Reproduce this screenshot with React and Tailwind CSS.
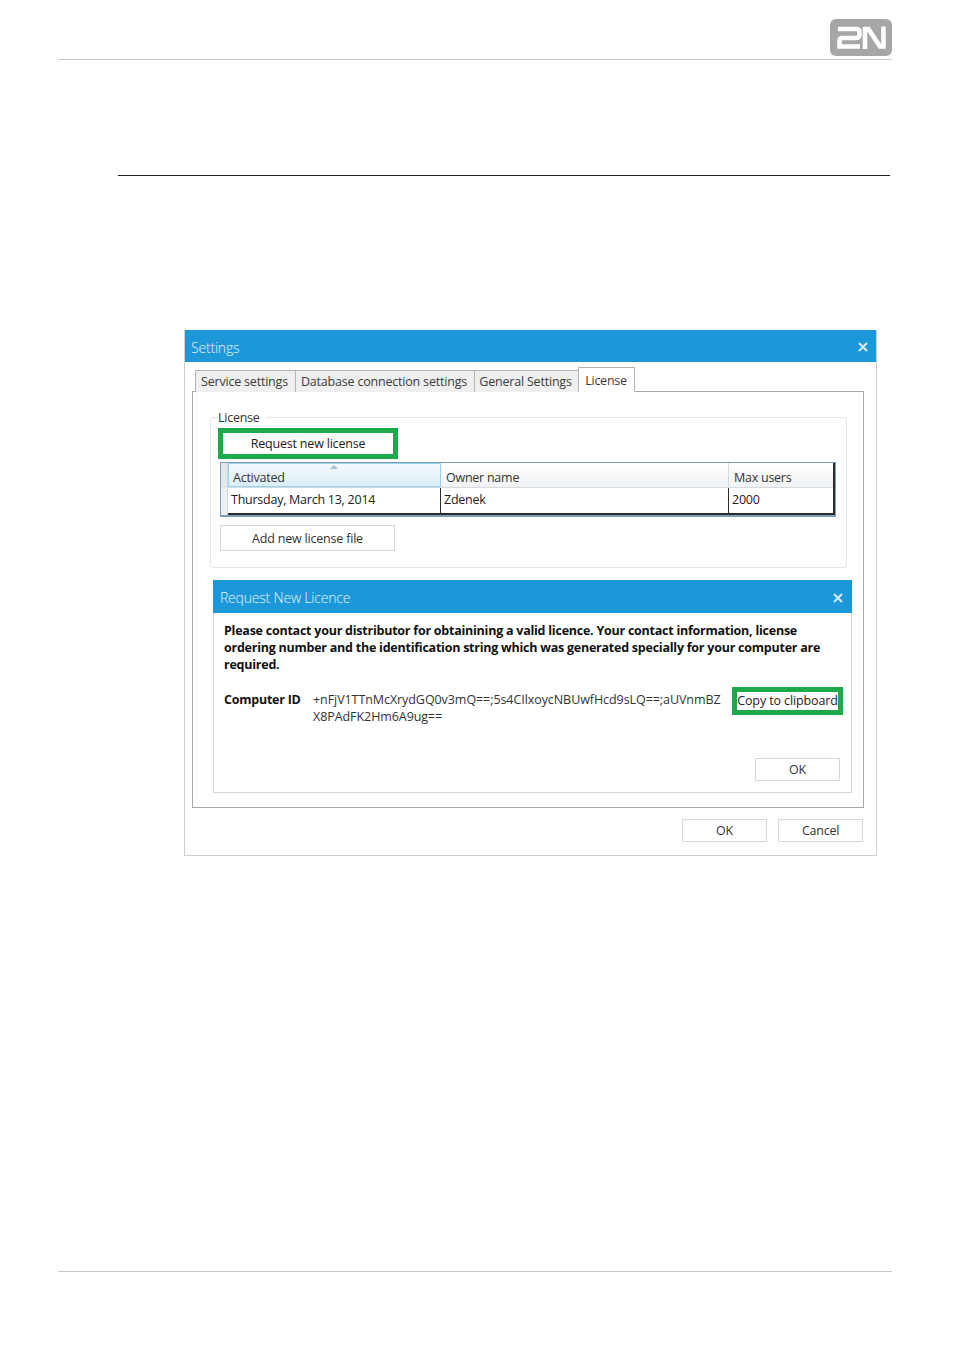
const font = { fontFamily: '"Open Sans","Noto Sans",sans-serif' };

function Logo() {
  return (
    <svg width="62" height="37" viewBox="0 0 62 37" className="block">
      <rect x="0" y="0" width="62" height="37" rx="6" fill="#a6a6a6" />
      <path d="M8 10H26Q29.5 10 29.5 13V15.5Q29.5 19 26 19H12.5Q9.5 19 9.5 22V27.5H30" fill="none" stroke="#fff" strokeWidth="4.6" />
      <path d="M35 30V10H38.5L50 27.5H53.5V7.5" fill="none" stroke="#fff" strokeWidth="4.6" />
    </svg>
  );
}

function Close() {
  return (
    <svg width="10" height="10" viewBox="0 0 10 10">
      <path d="M1 1L9 9M9 1L1 9" stroke="#d5ecf8" strokeWidth="2" />
    </svg>
  );
}

function Tab({ children, w }) {
  return (
    <div className={`${w} h-[22px] mt-[2px] pt-[1px] pr-[2px] flex items-center justify-center border border-[#b4b4b4] bg-[#efefef] text-[12.5px] tracking-[-0.2px] text-[#3c3c3c] border-b-0 -ml-px first:ml-0`}>
      {children}
    </div>
  );
}

function Btn({ children, className }) {
  return (
    <div className={`flex items-center justify-center border border-[#d6d9dc] bg-white text-[#333] pt-[2px] ${className}`}>
      {children}
    </div>
  );
}

export default function App() {
  return (
    <div style={font} className="relative w-[954px] h-[1350px] bg-white overflow-hidden flex flex-col">
      <header className="ml-[58px] mr-[62px] pt-[19px] h-[60px] border-b border-[#c9c9c9] flex justify-end items-start shrink-0">
        <Logo />
      </header>
      <div className="ml-[118px] mr-[64px] mt-[115px] border-t border-[#222]" />

      <div className="ml-[184px] w-[693px] h-[526px] mt-[154px] border border-[#cfcfcf] border-t-0 flex flex-col shrink-0">
        <div className="h-[32px] pt-[2px] bg-[#1c98d8] flex items-center justify-between pl-[6px] pr-[8px] text-[14px] font-light tracking-[-0.2px] text-[#e6f3fb] shrink-0">
          <span>Settings</span>
          <Close />
        </div>

        <div className="ml-[10px] mt-[6px] flex items-end h-[24px] relative z-10 -mb-px">
          <Tab w="w-[101px]">Service settings</Tab>
          <Tab w="w-[180px]">Database connection settings</Tab>
          <Tab w="w-[105px]">General Settings</Tab>
          <div className="w-[57px] h-[25px] pt-[3px] pr-[1px] -ml-px flex items-center justify-center border border-[#b4b4b4] border-b-white bg-white text-[12.5px] tracking-[-0.25px] text-[#3c3c3c]">
            License
          </div>
        </div>

        <div className="ml-[7px] w-[672px] h-[417px] border border-[#a9a9a9] flex flex-col text-[12.5px] tracking-[-0.25px] text-[#333] shrink-0">
          <fieldset className="ml-[17px] mt-[16px] w-[637px] h-[160px] border border-[#dfe6ec] rounded-[3px] pl-[7px]">
            <legend className="px-0 pr-[6px] pt-[2px] leading-[16px] -mb-[1px]">License</legend>
            <div className="w-[180px] h-[31px] mt-[3px] pt-[2px] border-[5px] border-[#1caa4a] flex items-center justify-center text-[#222] tracking-[-0.2px]">
              Request new license
            </div>
            <div className="ml-[2px] mt-[3px] w-[616px] h-[55px] border border-[#7f9db9] border-b-2 flex">
              <div className="w-[7px] bg-[#eef1f4] border-r border-[#cfd6dc] flex flex-col">
                <div className="h-[25px] bg-[#e3e7ea]" />
              </div>
              <div className="flex-1 flex flex-col border-r-2 border-[#2c2c2c]">
                <div className="h-[25px] flex border-b border-[#d5dadf] bg-linear-to-b from-white to-[#f1f2f3] shrink-0">
                  <div className="relative w-[213px] border border-[#96d5f2] bg-linear-to-b from-[#f4fafd] to-[#dcedf6] pl-[4px] pt-[5px] leading-[18px]">
                    Activated
                    <div className="absolute left-[101px] top-[1px] w-0 h-0 border-x-[4px] border-x-transparent border-b-[4px] border-b-[#a8bfd0]" />
                  </div>
                  <div className="w-[288px] border-r border-[#d5dadf] pl-[5px] pt-[6px] leading-[18px]">Owner name</div>
                  <div className="flex-1 pl-[5px] pt-[6px] leading-[18px]">Max users</div>
                </div>
                <div className="flex-1 flex border-b-2 border-[#2c2c2c] text-[#222]">
                  <div className="w-[213px] border-r border-[#2c2c2c] pl-[3px] leading-[24px]">Thursday, March 13, 2014</div>
                  <div className="w-[288px] border-r border-[#2c2c2c] pl-[3px] leading-[24px]">Zdenek</div>
                  <div className="flex-1 pl-[3px] leading-[24px]">2000</div>
                </div>
              </div>
            </div>
            <Btn className="ml-[2px] mt-[8px] w-[175px] h-[26px] tracking-[-0.2px]">Add new license file</Btn>
          </fieldset>

          <div className="ml-[20px] mt-[12px] w-[639px] h-[213px] border border-[#d3d5d7] border-t-0 flex flex-col">
            <div className="h-[33px] pt-[2px] -mx-px bg-[#1c98d8] flex items-center justify-between pl-[7px] pr-[9px] text-[14px] font-light tracking-[-0.2px] text-[#e6f3fb] shrink-0">
              <span>Request New Licence</span>
              <Close />
            </div>
            <p className="ml-[10px] mt-[9px] w-[612px] font-bold text-[12.5px] leading-[17px] tracking-[-0.24px] text-[#111]">
              Please contact your distributor for obtainining a valid licence. Your contact information, license ordering number and the identification string which was generated specially for your computer are required.
            </p>
            <div className="ml-[10px] mt-[18px] flex items-start">
              <span className="w-[89px] font-bold leading-[17px] tracking-[-0.24px] text-[#111] shrink-0">Computer ID</span>
              <div className="w-[416px] leading-[17px] text-[#333] tracking-[-0.07px] whitespace-nowrap shrink-0">
                +nFjV1TTnMcXrydGQ0v3mQ==;5s4CIlxoycNBUwfHcd9sLQ==;aUVnmBZ<br />X8PAdFK2Hm6A9ug==
              </div>
              <div className="ml-[3px] -mt-[4px] w-[111px] h-[28px] pt-[1px] border-[5px] border-[#1caa4a] flex items-center justify-center whitespace-nowrap text-[#222] text-[12.5px] tracking-[-0.12px] shrink-0">
                Copy to clipboard
              </div>
            </div>
            <div className="mt-auto mb-[11px] mr-[11px] flex justify-end">
              <Btn className="w-[85px] h-[23px]">OK</Btn>
            </div>
          </div>
        </div>

        <div className="mt-[11px] ml-[497px] flex gap-[11px] text-[12.5px] tracking-[-0.25px]">
          <Btn className="w-[85px] h-[23px]">OK</Btn>
          <Btn className="w-[85px] h-[23px]">Cancel</Btn>
        </div>
      </div>

      <div className="ml-[58px] mr-[62px] mt-[415px] border-t border-[#c9c9c9]" />
    </div>
  );
}
